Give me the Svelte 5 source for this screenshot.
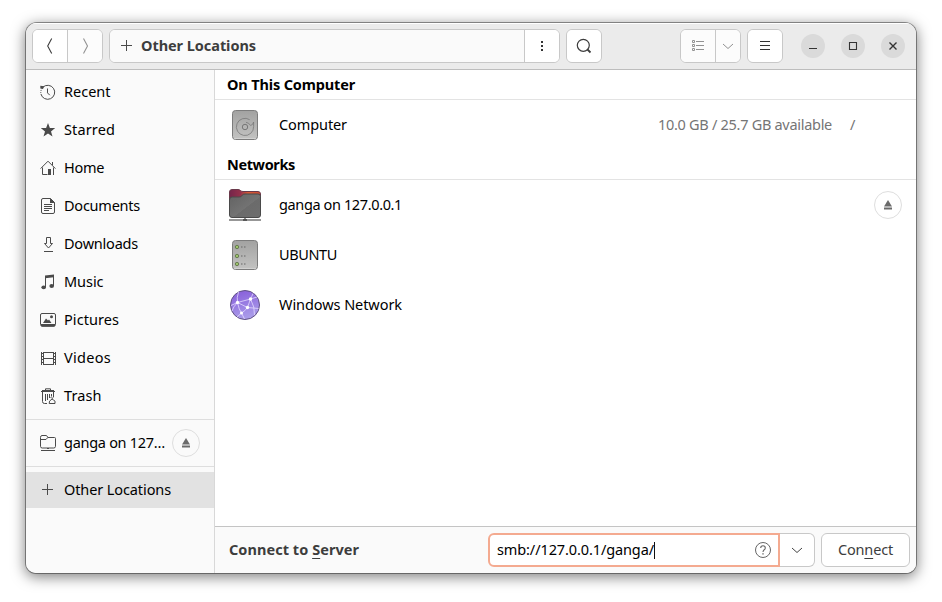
<script>
  const places = [
    { name: 'Recent', icon: 'recent', w: 46.5 },
    { name: 'Starred', icon: 'star', w: 51 },
    { name: 'Home', icon: 'home', w: 40 },
    { name: 'Documents', icon: 'doc', w: 76 },
    { name: 'Downloads', icon: 'down', w: 74 },
    { name: 'Music', icon: 'music', w: 39.5 },
    { name: 'Pictures', icon: 'pic', w: 55 },
    { name: 'Videos', icon: 'video', w: 47 },
    { name: 'Trash', icon: 'trash', w: 37.5 }
  ];
  const networks = [
    { name: 'ganga on 127.0.0.1', icon: 'folder', w: 123, eject: true },
    { name: 'UBUNTU', icon: 'server', w: 58 },
    { name: 'Windows Network', icon: 'globe', w: 123 }
  ];

  // Tracks a label out so that it occupies the given advance width.
  function fit(node, width) {
    const natural = node.getBoundingClientRect().width;
    const count = [...node.textContent].length;
    node.style.letterSpacing = `${(width - natural) / count}px`;
  }
</script>

{#snippet glyph(kind)}
  <svg class="glyph" width="16" height="16" viewBox="0 0 16 16" fill="none" stroke="#4a4a4a">
    {#if kind === 'recent'}
      <path d="M2.700 3.400A7 7 0 1 1 .9 9.950" /><path d="M.8 9A7 7 0 0 1 2 4.500" stroke-dasharray="1 1" />
      <path d="M7.500 4.500v4.400l2.300 2.300" /><path d="M.3 1.800l3.900.4-1.200 2.900L.3 4.600z" fill="#4a4a4a" stroke="none" />
    {:else if kind === 'star'}
      <path d="M8 1l1.900 5 5.300.1-4.200 3.300 1.500 5.200L8 11.600l-4.500 3 1.500-5.200L.8 6.100 6.100 6z" fill="#4a4a4a" stroke="none" />
    {:else if kind === 'home'}
      <path d="M.6 8.600L8 1.200l7.400 7.400M2.500 7.500v7h5M13.500 7.500v7.500M12.500 2v3" />
      <path d="M8 9h3v6H8z" fill="#4a4a4a" stroke="none" />
    {:else if kind === 'doc'}
      <path d="M3 .5h7.500l4 4V14q0 1.500-1.500 1.500H3Q1.500 15.500 1.500 14V2Q1.500.5 3 .5z" /><path d="M10 0l5 5h-5z" fill="#4a4a4a" stroke="none" /><path d="M4 6.500h8M4 8.500h8M4 10.500h8M4 12.500h5" />
    {:else if kind === 'down'}
      <path d="M6.500 1.500h4v6h2L8.500 12l-4-4.500h2zM4 15.500h9" />
    {:else if kind === 'music'}
      <path d="M5 1.500L14 .5v2.800l-9 1z" fill="#4a4a4a" stroke="none" /><path d="M5.500 2v11M13.500 1v11" />
      <ellipse cx="3.700" cy="13.300" rx="2.300" ry="1.900" fill="#4a4a4a" stroke="none" /><ellipse cx="11.700" cy="12" rx="2.300" ry="1.900" fill="#4a4a4a" stroke="none" />
    {:else if kind === 'pic'}
      <rect x=".5" y="1.500" width="15" height="12.500" rx="1.500" /><path d="M1 12h14v1.300q0 1.500-1.500 1.500h-11Q1 14.800 1 13.300z" fill="#4a4a4a" stroke="none" />
      <path d="M3 11l3-4.500 2 2 1-1 2.500 3.500z" fill="#4a4a4a" stroke="none" /><circle cx="11.500" cy="4.700" r="1.500" fill="#4a4a4a" stroke="none" />
    {:else if kind === 'video'}
      <path d="M1.500 2v13M15.500 2v13M3.500 2v13M13.500 2v13M4 2.500h9M4 8.500h9M4 14.500h9" />
      <path d="M2.500 2v13M14.500 2v13" stroke-dasharray="1 2" stroke-dashoffset="-1" />
    {:else if kind === 'trash'}
      <path d="M1 3.500h14M2 2.500h12" /><path d="M5.500 2V.8h5V2M2.500 4v9.500q0 2 2 2H7M13.500 4v5M5.500 6v7M7.500 6v6M9.500 6v4M11.500 6v2.500" />
      <path d="M10.500 9l1.500 1.500L13.500 9.300M12 11q-3.500 2-2.800 4.500h5.800q.8-3-1.500-3.500z" />
    {:else if kind === 'remote'}
      <path d="M.5 2.500v8.800q0 1.700 1.700 1.700h11.600q1.700 0 1.700-1.700V3.500q0-1-1-1H7.800L7 1Q6.700.5 6 .5H2Q.5.5.5 2.500zM.5 4.500H6l1.800-2M1 15.500h14M7 13.500h2" />
    {:else if kind === 'plus'}
      <path d="M7.500 2v11M2 7.500h11" />
    {/if}
  </svg>
{/snippet}

{#snippet eject()}
  <button class="eject" aria-label="Eject">
    <svg width="10" height="10" viewBox="0 0 10 10" fill="#6a6a6a"><path d="M5 0l4 6.500H1z" /><path d="M1 7.500h8v2H1z" /></svg>
  </button>
{/snippet}

{#snippet big(kind)}
  <svg class="big" width="32" height="32" viewBox="0 0 32 32">
    <defs>
      <linearGradient id="steel" x2="0" y2="1"><stop stop-color="#a2a2a1" /><stop offset="1" stop-color="#c3c3c2" /></linearGradient>
      <linearGradient id="violet" x2=".3" y2="1"><stop stop-color="#8559d9" /><stop offset="1" stop-color="#a99be9" /></linearGradient>
      <linearGradient id="tab" x2="1" y2="0"><stop stop-color="#74254b" /><stop offset=".35" stop-color="#93304b" /><stop offset=".6" stop-color="#d95a35" /><stop offset="1" stop-color="#c94b35" /></linearGradient>
      <linearGradient id="slate" x2="1" y2="1"><stop stop-color="#626262" /><stop offset=".55" stop-color="#737373" /><stop offset=".56" stop-color="#6b6b6b" /><stop offset="1" stop-color="#6e6e6e" /></linearGradient>
    </defs>
    {#if kind === 'disk' || kind === 'server'}
      <rect x="3.500" y="1.500" width="25" height="29" rx="3" fill="url(#steel)" stroke="#7c7c7c" />
      <path d="M5 29.500h22" stroke="#d5d5d5" stroke-width=".8" />
      {#if kind === 'disk'}
        <g fill="none" stroke="#777"><circle cx="16" cy="18" r="2.700" /><path d="M20.700 10.700A8.600 8.600 0 1 0 24.600 17.500v-4.500q-.2 2.500-3 3.500-1.600-2.800-4.600-3.200" stroke-width=".8" /></g>
      {:else}
        {#each [8, 17, 25] as y}
          <circle cx="8" cy={y} r="1.700" fill="#9dc56c" stroke="#687c50" /><path d="M12 {y}h1.500M15 {y}h1.500" stroke="#666" stroke-width="1.200" />
        {/each}
      {/if}
    {:else if kind === 'folder'}
      <path d="M.5 8V3Q.5.5 3 .5h6q1.500 0 2.500 1t2.500 1h15q2.500 0 2.500 2.500v6H.5z" fill="url(#tab)" stroke="#6a394a" />
      <path d="M.5 11Q.5 8 3 8h7q2 0 3-1.500T16 5h13q2.500 0 2.500 2.500V26q0 2.500-2.500 2.500H3Q.5 28.500.5 26z" fill="url(#slate)" stroke="#4a4a4a" />
      <path d="M0 31h32M16 29v2" stroke="#757575" stroke-width="1.600" /><path d="M14 31h4" stroke="#444" stroke-width="1.600" />
    {:else}
      <circle cx="16" cy="16" r="14.500" fill="url(#violet)" stroke="#615285" />
      <g fill="none" stroke="#e4daff" stroke-width=".8"><path d="M2 16.500L8.500 13.500 21.500 10l6.500-2M9.500 3Q7.500 9 8.500 13.500L18.500 18.500l11 1M8.500 13.500Q10 21 12.500 24L15.500 30M24 4.500Q22.500 8 21.500 10l-3 8.500Q16 22 12.500 24L8 28M21.500 10Q26 18 25.500 26M8.500 13.500Q4 18 3 22" /></g>
      <g fill="#fff"><circle cx="8.500" cy="13.500" r="1.700" /><circle cx="21.500" cy="10" r="1.700" /><circle cx="18.500" cy="18.500" r="1.700" /><circle cx="12.500" cy="24" r="1.500" /></g>
    {/if}
  </svg>
{/snippet}

<div class="desktop">
  <main class="window">
    <header>
      <div class="group nav">
        <button aria-label="Back"><svg width="16" height="16" viewBox="0 0 16 16" fill="none" stroke="#3d3d3d" stroke-width="1.100"><path d="M9.700 .5L5.700 8l4 7.500" /></svg></button>
        <button class="dim" aria-label="Forward"><svg width="16" height="16" viewBox="0 0 16 16" fill="none" stroke="#929292" stroke-width="1.100"><path d="M6.500 .5L10.500 8l-4 7.500" /></svg></button>
      </div>
      <div class="group path">
        <div class="crumb">{@render glyph('plus')}<b><span use:fit={115}>Other Locations</span></b></div>
        <button class="more" aria-label="Menu"><svg width="16" height="16" viewBox="0 0 16 16" fill="#333"><path d="M7 3h2v2H7zM7 7h2v2H7zM7 11h2v2H7z" /></svg></button>
      </div>
      <div class="group single"><button aria-label="Search"><svg width="16" height="16" viewBox="0 0 16 16" fill="none" stroke="#3d3d3d" stroke-width="1.200"><circle cx="7.300" cy="7.300" r="6" /><path d="M11.500 11.500l3 3" stroke-width="1.800" /></svg></button></div>
      <div class="gap"></div>
      <div class="group view">
        <button class="dim" aria-label="List view"><svg width="16" height="16" viewBox="0 0 16 16" fill="none" stroke="#929292"><path d="M2.500 2.500h2v2h-2zM2.500 6.500h2v2h-2zM2.500 10.500h2v2h-2zM6 3.500h8M6 7.500h8M6 11.500h8" /></svg></button>
        <button class="dim" aria-label="View options"><svg width="12" height="12" viewBox="0 0 12 12" fill="none" stroke="#929292"><path d="M1 4l5 4.500L11 4" /></svg></button>
      </div>
      <div class="group single"><button aria-label="Main menu"><svg width="16" height="16" viewBox="0 0 16 16" fill="none" stroke="#333"><path d="M3 3.500h10M3 7.500h10M3 11.500h10" /></svg></button></div>
      <div class="controls">
        <button aria-label="Minimize"><svg width="10" height="10" viewBox="0 0 10 10"><path d="M1 7.500h8" stroke="#333" /></svg></button>
        <button aria-label="Maximize"><svg width="10" height="10" viewBox="0 0 10 10"><path d="M1.500 1.500h7v7h-7z" fill="none" stroke="#333" stroke-width="1.100" /></svg></button>
        <button aria-label="Close"><svg width="10" height="10" viewBox="0 0 10 10"><path d="M1.500 1.500l7 7M8.500 1.500l-7 7" stroke="#333" stroke-width="1.400" /></svg></button>
      </div>
    </header>
    <div class="body">
      <nav class="sidebar">
        <div class="places">
          {#each places as p}
            <div class="place">{@render glyph(p.icon)}<span use:fit={p.w}>{p.name}</span></div>
          {/each}
        </div>
        <div class="mount"><div class="place">{@render glyph('remote')}<span use:fit={101}>ganga on 127…</span><div class="gap"></div>{@render eject()}</div></div>
        <div class="place selected">{@render glyph('plus')}<span use:fit={107}>Other Locations</span></div>
      </nav>
      <section class="content">
        <div class="list">
          <h2><span use:fit={128}>On This Computer</span></h2>
          <div class="row">{@render big('disk')}<span use:fit={68}>Computer</span>
            <div class="space"><span use:fit={174}>10.0 GB / 25.7 GB available</span></div><div class="root">/</div>
          </div>
          <h2><span use:fit={68}>Networks</span></h2>
          {#each networks as n}
            <div class="row">{@render big(n.icon)}<span use:fit={n.w}>{n.name}</span>{#if n.eject}<div class="gap"></div>{@render eject()}{/if}</div>
          {/each}
        </div>
        <footer>
          <b><span use:fit={130}>Connect to <u>S</u>erver</span></b>
          <div class="gap"></div>
          <div class="entry">
            <span use:fit={157}>smb://127.0.0.1/ganga/</span><i class="caret"></i>
            <div class="gap"></div>
            <svg width="16" height="16" viewBox="0 0 16 16" fill="none" stroke="#666"><circle cx="8" cy="8" r="7.500" /><path d="M5.700 6Q5.700 3.800 8 3.800T10.300 6Q10.300 7 9.200 7.800T8 10" stroke-width="1.100" /><path d="M7.300 11.200h1.400v1.400H7.300z" fill="#666" stroke="none" /></svg>
          </div>
          <button class="drop" aria-label="Recent servers"><svg width="12" height="12" viewBox="0 0 12 12" fill="none" stroke="#444"><path d="M1 4l5 4.500L11 4" /></svg></button>
          <button class="connect"><span use:fit={55}>Con<u>n</u>ect</span></button>
        </footer>
      </section>
    </div>
  </main>
</div>

<style>
  :global(body) { background: #fff; }
  * { box-sizing: border-box; }
  svg { display: block; flex: none; }
  span { display: inline-block; white-space: nowrap; }
  b { display: flex; }
  .place > span, .row > span, .space, .root, b, .entry > span, .connect > span { padding-bottom: 2px; }
  button { font: inherit; color: inherit; padding: 0; margin: 0; border: 0; background: #fff; display: flex; align-items: center; justify-content: center; }
  u { text-decoration-thickness: 1px; text-underline-offset: 3px; }
  .desktop { width: 942px; height: 602px; padding: 23px 26px 29px; overflow: hidden; background: #fff; font: 14.5px/20px "Noto Sans", "Open Sans", sans-serif; color: #000; }
  .window { width: 890px; height: 550px; display: flex; flex-direction: column; overflow: hidden; border-radius: 11px 11px 10px 10px; background: #fafafa; box-shadow: 0 0 0 1px rgba(0,0,0,.38), 0 3px 14px 1px rgba(0,0,0,.5); }
  header { height: 47px; flex: none; display: flex; align-items: flex-start; padding: 6px 11px 0 6px; background: #ebebeb; border-bottom: 1px solid #bdbdbd; box-shadow: inset 0 1px #fff; }
  .group { height: 34px; display: flex; border: 1px solid #c8c8c8; border-radius: 6px; background: #fff; overflow: hidden; margin-right: 6px; }
  .group button + button, .more { border-left: 1px solid #c8c8c8; }
  .nav { width: 71px; }
  .nav button { flex: 1; }
  .dim { background: #fcfcfc; }
  .path { width: 451px; }
  .crumb { flex: 1; display: flex; align-items: center; padding-left: 9px; gap: 6px; background: #fafafa; color: #3d3d3d; }
  .more { width: 35px; }
  .single { width: 36px; }
  .single button { flex: 1; }
  .gap { flex: 1; }
  .view { width: 61px; }
  .view button:first-child { width: 34px; }
  .view button:last-child { width: 25px; }
  .controls { display: flex; gap: 16px; padding: 5px 0 0 12px; }
  .controls button { width: 24px; height: 24px; border-radius: 50%; background: #dadada; }
  .body { flex: 1; display: flex; min-height: 0; }
  .sidebar { width: 189px; flex: none; border-right: 1px solid #d8d8d8; background: #fafafa; }
  .places { padding: 4px 0; display: flex; flex-direction: column; gap: 2px; border-bottom: 1px solid #dedede; height: 350px; }
  .place { height: 36px; flex: none; padding-left: 14px; display: flex; align-items: center; white-space: nowrap; }
  .glyph + span { margin-left: 8px; }
  .mount { height: 47px; padding: 5px 0; border-bottom: 1px solid #dedede; margin-bottom: 5px; }
  .mount .place { padding-right: 14px; }
  .selected { background: #e2e2e2; }
  .eject { width: 28px; height: 28px; flex: none; border: 1px solid #dedede; border-radius: 50%; background: transparent; }
  .content { flex: 1; display: flex; flex-direction: column; background: #fff; min-width: 0; }
  .list { flex: 1; }
  h2 { margin: 0; height: 30px; padding: 4px 0 0 12px; border-bottom: 1px solid #e3e3e3; font-size: 14.5px; line-height: 20px; font-weight: 700; }
  .row { height: 50px; display: flex; align-items: center; padding: 0 14px; white-space: nowrap; }
  .big { margin-right: 18px; }
  .space { flex: 1; text-align: right; color: #757575; margin-right: 18px; }
  .root { width: 52px; color: #757575; }
  footer { height: 47px; flex: none; display: flex; align-items: center; padding: 0 6px 0 14px; background: #fafafa; border-top: 1px solid #c4c4c4; color: #3d3d3d; white-space: nowrap; }
  .entry { width: 292px; height: 34px; display: flex; align-items: center; padding: 0 7px; border: 2px solid #f4aa90; border-radius: 6px 0 0 6px; background: #fff; color: #000; }
  .caret { width: 1px; height: 17px; background: #111; }
  .drop { width: 35px; height: 34px; border: 1px solid #c8c8c8; border-left: 0; border-radius: 0 6px 6px 0; }
  .connect { width: 89px; height: 34px; border: 1px solid #c8c8c8; border-radius: 6px; margin-left: 6px; }
</style>
